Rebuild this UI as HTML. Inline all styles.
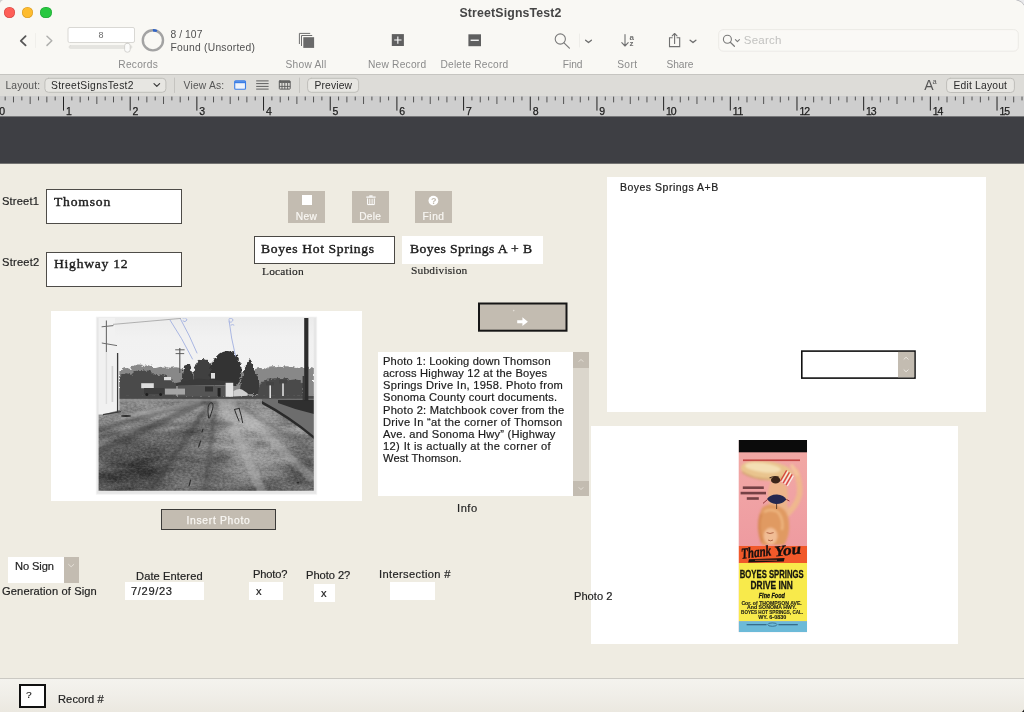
<!DOCTYPE html>
<html><head><meta charset="utf-8"><title>StreetSignsTest2</title>
<style>
html,body{margin:0;padding:0;background:#efece2;}
body{width:1024px;height:712px;overflow:hidden;}
#win{position:relative;width:1024px;height:712px;overflow:hidden;background:#efece2;font-family:"Liberation Sans",sans-serif;}
.t{position:absolute;white-space:pre;}
.a{position:absolute;box-sizing:border-box;}
svg{position:absolute;overflow:visible;}

</style></head>
<body>
<div id="win">
<!-- title + toolbar -->
<div class="a" style="left:0;top:0;width:1024px;height:74px;background:#f9f8f4;"></div>
<div class="a" style="left:0;top:74px;width:1024px;height:1px;background:#c6c5c1;"></div>
<div class="a" style="left:0;top:75px;width:1024px;height:21px;background:#dddcd8;"></div>
<!-- traffic lights -->
<div class="a" style="left:3.8px;top:7.1px;width:11.2px;height:11.2px;border-radius:50%;background:#fe5f57;box-shadow:inset 0 0 0 .6px rgba(160,30,30,.45);"></div>
<div class="a" style="left:21.9px;top:7.1px;width:11.2px;height:11.2px;border-radius:50%;background:#febc2e;box-shadow:inset 0 0 0 .6px rgba(170,110,10,.45);"></div>
<div class="a" style="left:40.4px;top:7.1px;width:11.2px;height:11.2px;border-radius:50%;background:#28c840;box-shadow:inset 0 0 0 .6px rgba(10,120,30,.45);"></div>
<!-- window corners -->
<svg style="left:0;top:0" width="1024" height="10" viewBox="0 0 1024 10" fill="none">
  <path d="M1016.4 0 H1024 V5.4 Q1022.6 1.6 1016.4 0 Z" fill="#ebebed"/>
  <path d="M1016.2 -.2 Q1022.4 1.4 1024.2 5.4" stroke="#bdbdc0" stroke-width="1"/>
  <path d="M0 3 V0 H3 Q.8 .8 0 3 Z" fill="#d0d0d0"/>
</svg>
<!-- nav chevrons -->
<svg style="left:0;top:0" width="1024" height="96" viewBox="0 0 1024 96" fill="none" stroke-linecap="round" stroke-linejoin="round">
  <path d="M25.6 36.2 L20.8 40.8 L25.6 45.4" stroke="#565656" stroke-width="1.8"/>
  <path d="M47 36.2 L51.8 40.8 L47 45.4" stroke="#b0b0ae" stroke-width="1.5"/>
  <path d="M35.5 33.5 V47.5" stroke="#f0efeb" stroke-width="1"/>
  <!-- record number box -->
  <rect x="68" y="27.5" width="66.5" height="15" rx="1.5" fill="#fff" stroke="#d9d8d4" stroke-width="1"/>
  <!-- slider -->
  <rect x="69" y="45.6" width="63" height="2.8" rx="1.4" fill="#e6e5e1" stroke="#dcdbd7" stroke-width=".6"/>
  <rect x="124.6" y="43.2" width="5.6" height="9" rx="2.6" fill="#fbfbfa" stroke="#cfcecb" stroke-width=".9"/>
  <!-- pie circle -->
  <circle cx="152.9" cy="40.3" r="10.1" stroke="#a3a3a3" stroke-width="2.4"/>
  <path d="M152.9 30.2 A10.1 10.1 0 0 1 156.9 31" stroke="#2f63c8" stroke-width="2.4" stroke-linecap="butt"/>
  <!-- show all -->
  <g stroke="#6e6e6e" stroke-width="1" stroke-linecap="butt" stroke-linejoin="miter">
    <path d="M299.4 44 V33.4 H310.2"/>
    <path d="M301.5 46 V35.5 H312.2"/>
  </g>
  <rect x="303.3" y="37.2" width="10.8" height="10.7" fill="#6a6a6a"/>
  <!-- new record -->
  <rect x="391.8" y="34.1" width="12.1" height="11.9" fill="#606060"/>
  <path d="M397.85 36.4 V43.7 M394.2 40.05 H401.5" stroke="#fff" stroke-width="1.1" stroke-linecap="butt"/>
  <!-- delete record -->
  <rect x="468.4" y="34.3" width="12.6" height="11.9" fill="#606060"/>
  <path d="M470.6 40.25 H478.8" stroke="#fff" stroke-width="1.3" stroke-linecap="butt"/>
  <!-- find -->
  <circle cx="560.3" cy="39" r="5.1" stroke="#7b7b7b" stroke-width="1.1"/>
  <path d="M564 42.8 L569.4 48.2" stroke="#7b7b7b" stroke-width="1.2"/>
  <path d="M579.5 34 V47" stroke="#eeede9" stroke-width="1"/>
  <path d="M585.6 40.2 L588.5 42.6 L591.4 40.2" stroke="#6e6e6e" stroke-width="1.3"/>
  <!-- sort -->
  <path d="M625 34.6 V45.6 M621.8 42.6 L625 46 L628.2 42.6" stroke="#707070" stroke-width="1.1"/>
  <!-- share -->
  <path d="M672.2 37.8 H669.5 V46.6 H679.7 V37.8 H677" stroke="#707070" stroke-width="1.1" stroke-linejoin="miter"/>
  <path d="M674.6 43.4 V33.6 M672.2 35.9 L674.6 33.5 L677 35.9" stroke="#707070" stroke-width="1.1"/>
  <path d="M690.1 40.2 L693 42.6 L695.9 40.2" stroke="#6e6e6e" stroke-width="1.3"/>
  <!-- search box -->
  <rect x="718.7" y="29.6" width="299.6" height="21.6" rx="4.5" fill="#faf9f6" stroke="#eceae6" stroke-width="1"/>
  <circle cx="727.4" cy="39.3" r="4" stroke="#7a7a7a" stroke-width="1.1"/>
  <path d="M730.3 42.3 L734.4 46.3" stroke="#7a7a7a" stroke-width="1.2"/>
  <path d="M735.4 39.6 L737.4 41.6 L739.4 39.6" stroke="#7a7a7a" stroke-width="1.1"/>
  <!-- layout bar: popup -->
  <rect x="44.9" y="78.3" width="121" height="14" rx="3.6" fill="#e7e6e2" stroke="#bfbeba" stroke-width="1"/>
  <path d="M154 83.6 L156.8 86.4 L159.6 83.6" stroke="#3a3a3a" stroke-width="1.2"/>
  <path d="M174.5 78 V92.5 M299.5 78 V92.5" stroke="#c5c4c0" stroke-width="1"/>
  <!-- view as: form (blue) -->
  <rect x="234.7" y="80.7" width="10.8" height="8.5" rx="1" fill="#eef3fb" stroke="#3a7ee6" stroke-width="1.1"/>
  <path d="M234.7 82.2 H245.5" stroke="#3a7ee6" stroke-width="2" stroke-linecap="butt"/>
  <!-- list -->
  <path d="M256.2 80.9 H268.6 M256.2 83.6 H268.6 M256.2 86.4 H268.6 M256.2 89.1 H268.6" stroke="#585858" stroke-width=".95" stroke-linecap="butt"/>
  <!-- table -->
  <rect x="279.3" y="80.8" width="10.9" height="8.3" rx=".6" stroke="#5a5a5a" stroke-width="1"/>
  <path d="M279.3 82 H290.2" stroke="#5a5a5a" stroke-width="1.8" stroke-linecap="butt"/>
  <path d="M279.3 86.4 H290.2 M282 83 V89.1 M284.8 83 V89.1 M287.6 83 V89.1" stroke="#5a5a5a" stroke-width=".9" stroke-linecap="butt"/>
  <!-- preview button -->
  <rect x="307.6" y="78.3" width="51" height="14" rx="3.6" fill="#e7e6e2" stroke="#bfbeba" stroke-width="1"/>
  <!-- edit layout button -->
  <rect x="946.6" y="78.3" width="67.8" height="14.2" rx="3.6" fill="#e7e6e2" stroke="#bfbeba" stroke-width="1"/>
</svg>

<div class="a" style="left:0;top:96px;width:1024px;height:20.4px;background:#cecece;"></div>
<div class="a" style="left:0;top:116px;width:1024px;height:48px;background:#3e3f44;"></div><div class="a" style="left:0;top:116px;width:1024px;height:1px;background:#77787a;"></div><div class="a" style="left:0;top:163px;width:1024px;height:1px;background:#737372;"></div>
<svg style="left:0;top:96px" width="1024" height="21" viewBox="0 0 1024 21" stroke="#2a2a2a" stroke-width="0.9" stroke-linecap="butt">
<path d="M63.50 0.6V14.6 M130.18 0.6V14.6 M196.86 0.6V14.6 M263.54 0.6V14.6 M330.22 0.6V14.6 M396.90 0.6V14.6 M463.58 0.6V14.6 M530.26 0.6V14.6 M596.94 0.6V14.6 M663.62 0.6V14.6 M730.30 0.6V14.6 M796.98 0.6V14.6 M863.66 0.6V14.6 M930.34 0.6V14.6 M997.02 0.6V14.6" stroke="#222" stroke-width="1"/>
<path d="M5.16 0.6V4.4 M13.49 0.6V6.4 M21.83 0.6V4.4 M30.16 0.6V8 M38.50 0.6V4.4 M46.83 0.6V6.4 M55.17 0.6V4.4 M71.84 0.6V4.4 M80.17 0.6V6.4 M88.50 0.6V4.4 M96.84 0.6V8 M105.18 0.6V4.4 M113.51 0.6V6.4 M121.84 0.6V4.4 M138.52 0.6V4.4 M146.85 0.6V6.4 M155.19 0.6V4.4 M163.52 0.6V8 M171.86 0.6V4.4 M180.19 0.6V6.4 M188.53 0.6V4.4 M205.20 0.6V4.4 M213.53 0.6V6.4 M221.87 0.6V4.4 M230.20 0.6V8 M238.54 0.6V4.4 M246.87 0.6V6.4 M255.21 0.6V4.4 M271.88 0.6V4.4 M280.21 0.6V6.4 M288.55 0.6V4.4 M296.88 0.6V8 M305.22 0.6V4.4 M313.55 0.6V6.4 M321.89 0.6V4.4 M338.56 0.6V4.4 M346.89 0.6V6.4 M355.23 0.6V4.4 M363.56 0.6V8 M371.90 0.6V4.4 M380.23 0.6V6.4 M388.57 0.6V4.4 M405.24 0.6V4.4 M413.57 0.6V6.4 M421.91 0.6V4.4 M430.24 0.6V8 M438.58 0.6V4.4 M446.91 0.6V6.4 M455.25 0.6V4.4 M471.92 0.6V4.4 M480.25 0.6V6.4 M488.59 0.6V4.4 M496.92 0.6V8 M505.26 0.6V4.4 M513.59 0.6V6.4 M521.93 0.6V4.4 M538.60 0.6V4.4 M546.93 0.6V6.4 M555.27 0.6V4.4 M563.60 0.6V8 M571.94 0.6V4.4 M580.27 0.6V6.4 M588.61 0.6V4.4 M605.28 0.6V4.4 M613.61 0.6V6.4 M621.95 0.6V4.4 M630.28 0.6V8 M638.62 0.6V4.4 M646.95 0.6V6.4 M655.29 0.6V4.4 M671.96 0.6V4.4 M680.29 0.6V6.4 M688.63 0.6V4.4 M696.96 0.6V8 M705.30 0.6V4.4 M713.63 0.6V6.4 M721.97 0.6V4.4 M738.64 0.6V4.4 M746.97 0.6V6.4 M755.31 0.6V4.4 M763.64 0.6V8 M771.98 0.6V4.4 M780.31 0.6V6.4 M788.65 0.6V4.4 M805.32 0.6V4.4 M813.65 0.6V6.4 M821.99 0.6V4.4 M830.32 0.6V8 M838.66 0.6V4.4 M846.99 0.6V6.4 M855.33 0.6V4.4 M872.00 0.6V4.4 M880.33 0.6V6.4 M888.67 0.6V4.4 M897.00 0.6V8 M905.34 0.6V4.4 M913.67 0.6V6.4 M922.01 0.6V4.4 M938.68 0.6V4.4 M947.01 0.6V6.4 M955.35 0.6V4.4 M963.68 0.6V8 M972.02 0.6V4.4 M980.35 0.6V6.4 M988.69 0.6V4.4 M1005.36 0.6V4.4 M1013.69 0.6V6.4 M1022.03 0.6V4.4" stroke="#444" stroke-width="0.9"/>
</svg>
<!-- ===== body ===== -->
<!-- street fields -->
<div class="a" style="left:45.9px;top:189.4px;width:135.8px;height:34.4px;background:#fff;border:1.1px solid #4e4c48;"></div>
<div class="a" style="left:45.9px;top:251.6px;width:135.8px;height:35px;background:#fff;border:1.1px solid #4e4c48;"></div>
<!-- buttons new/dele/find -->
<div class="a" style="left:288px;top:191.4px;width:36.8px;height:31.2px;background:#c3bcb1;"></div>
<div class="a" style="left:352px;top:191.4px;width:36.8px;height:31.2px;background:#c3bcb1;"></div>
<div class="a" style="left:414.7px;top:191.4px;width:37.3px;height:31.2px;background:#c3bcb1;"></div>
<div class="a" style="left:302px;top:195.2px;width:9.9px;height:9.8px;background:#fff;"></div>

<!-- location / subdivision -->
<div class="a" style="left:253.7px;top:236px;width:141px;height:28.4px;background:#fff;border:1.3px solid #4a4844;"></div>
<div class="a" style="left:401.7px;top:235.7px;width:141.1px;height:28.6px;background:#fff;"></div>
<!-- photo 1 container -->
<div class="a" style="left:51px;top:311px;width:310.5px;height:190px;background:#fff;"></div>
<!-- insert photo button -->
<div class="a" style="left:160.9px;top:509.4px;width:115px;height:20.2px;background:#c3bcb1;border:1.1px solid #3c3b39;"></div>
<!-- info box -->
<div class="a" style="left:377.6px;top:352.1px;width:195.6px;height:144.1px;background:#fff;"></div>
<div class="a" style="left:573.2px;top:352.1px;width:15.7px;height:144.1px;background:#dbd6cc;"></div>
<div class="a" style="left:573.2px;top:352.1px;width:15.7px;height:15.6px;background:#c3bcb1;"></div>
<div class="a" style="left:573.2px;top:480.8px;width:15.7px;height:15.4px;background:#c3bcb1;"></div>
<!-- right panel -->
<div class="a" style="left:607.3px;top:177.4px;width:378.8px;height:234.8px;background:#fff;"></div>
<!-- photo 2 container -->
<div class="a" style="left:591px;top:426px;width:366.5px;height:217.8px;background:#fff;"></div>
<!-- bottom fields -->
<div class="a" style="left:8.2px;top:556.7px;width:55.6px;height:26.3px;background:#fff;"></div>
<div class="a" style="left:63.8px;top:556.7px;width:14.8px;height:26.3px;background:#c3bcb1;"></div>
<div class="a" style="left:124.8px;top:581.8px;width:78.8px;height:18.3px;background:#fff;"></div>
<div class="a" style="left:249.2px;top:582px;width:34.2px;height:18px;background:#fff;"></div>
<div class="a" style="left:313.9px;top:583.6px;width:21.1px;height:18.3px;background:#fff;"></div>
<div class="a" style="left:389.8px;top:582px;width:45.5px;height:18px;background:#fff;"></div>
<!-- footer -->
<div class="a" style="left:0;top:678px;width:1024px;height:34px;background:linear-gradient(#f4f3ee,#f0eee8 50%,#ebe8e0);border-top:1px solid #cbc9c3;"></div>
<div class="a" style="left:18.8px;top:683.9px;width:27.2px;height:23.7px;background:#fff;border:2px solid #111;"></div>
<svg style="left:0;top:0" width="1024" height="712" viewBox="0 0 1024 712" fill="none">
  <!-- trash -->
  <g stroke="#fff" stroke-width="1" stroke-linecap="butt">
    <path d="M366.3 197.1 H375.6" stroke-width="1.2"/>
    <path d="M369.3 196 H372.6" stroke-width="1.3"/>
    <path d="M367.6 198.4 V204.6 H374.3 V198.4" stroke-width="1"/>
    <path d="M369.8 198.8 V204 M372.1 198.8 V204" stroke-width=".9"/>
  </g>
  <!-- ? icon -->
  <circle cx="433.4" cy="200.6" r="4.9" fill="#fff"/>
  <!-- arrow button -->
  <rect x="479" y="303.5" width="87.5" height="27.2" fill="#c3bcb1" stroke="#161616" stroke-width="2"/>
  <path d="M517.2 320.2 H522.4 V317.3 L527.9 321.7 L522.4 326.1 V323.2 H517.2 Z" fill="#fff"/>
  <circle cx="513.7" cy="310.6" r=".8" fill="#e6e1d9"/>
  <!-- small field w/ stepper -->
  <rect x="801.8" y="351.1" width="113.2" height="27" fill="#fff" stroke="#111" stroke-width="1.6"/>
  <rect x="898" y="351.9" width="16.2" height="25.4" fill="#c3bcb1"/>
  <path d="M904 359.2 L906.1 357.2 L908.2 359.2 M904 369.8 L906.1 371.8 L908.2 369.8" stroke="#e9e5de" stroke-width="1" stroke-linecap="round" stroke-linejoin="round"/>
  <!-- info scrollbar chevrons -->
  <path d="M579 361.4 L581 359.4 L583 361.4 M579 487.6 L581 489.6 L583 487.6" stroke="#e6e1d9" stroke-width="1" stroke-linecap="round" stroke-linejoin="round"/>
  <!-- no sign chevron -->
  <path d="M68.6 564.4 L71.2 566.8 L73.8 564.4" stroke="#e4dfd7" stroke-width="1" stroke-linecap="round" stroke-linejoin="round"/>
  <path d="M1024 709.6 Q1023 711.4 1021.8 712 H1024 Z" fill="#151515"/>
</svg>

<!-- ===== photo 1 (b/w street photo) ===== -->
<svg style="left:0;top:0" width="1024" height="712" viewBox="0 0 1024 712">
<defs>
  <clipPath id="p1clip"><rect x="98.6" y="318" width="215.2" height="172.8"/></clipPath>
  <linearGradient id="p1sky" x1="0" y1="0" x2="0" y2="1"><stop offset="0" stop-color="#ebebeb"/><stop offset=".25" stop-color="#f1f1f1"/><stop offset="1" stop-color="#f3f3f3"/></linearGradient>
  <linearGradient id="p1road" x1="0" y1="0" x2="0" y2="1"><stop offset="0" stop-color="#7a7a7a"/><stop offset=".12" stop-color="#8c8c8c"/><stop offset=".45" stop-color="#787878"/><stop offset="1" stop-color="#626262"/></linearGradient>
  <radialGradient id="p1lite" cx=".5" cy=".5" r=".5"><stop offset="0" stop-color="#b4b4b4" stop-opacity=".85"/><stop offset="1" stop-color="#b4b4b4" stop-opacity="0"/></radialGradient>
  <radialGradient id="p1dark" cx=".5" cy=".5" r=".5"><stop offset="0" stop-color="#2e2e2e" stop-opacity=".8"/><stop offset="1" stop-color="#2e2e2e" stop-opacity="0"/></radialGradient>
  <filter id="p1b1" color-interpolation-filters="sRGB" x="-5%" y="-5%" width="110%" height="110%"><feGaussianBlur stdDeviation=".7"/></filter>
  <filter id="p1b2" color-interpolation-filters="sRGB" x="-10%" y="-10%" width="120%" height="120%"><feGaussianBlur stdDeviation="1.6"/></filter>
  <filter id="p1b0" color-interpolation-filters="sRGB" x="-5%" y="-5%" width="110%" height="110%"><feGaussianBlur stdDeviation=".35"/></filter>
  <filter id="p1soft" color-interpolation-filters="sRGB" x="-2%" y="-2%" width="104%" height="104%"><feGaussianBlur stdDeviation=".45"/></filter>
  <filter id="p1tree" color-interpolation-filters="sRGB" x="-10%" y="-20%" width="120%" height="140%">
    <feTurbulence type="fractalNoise" baseFrequency=".35" numOctaves="2" seed="11" result="n"/>
    <feDisplacementMap in="SourceGraphic" in2="n" scale="5" xChannelSelector="R" yChannelSelector="G" result="d"/>
    <feGaussianBlur in="d" stdDeviation=".55"/>
  </filter>
  <filter id="p1tex" x="0" y="0" width="100%" height="100%" color-interpolation-filters="sRGB">
    <feTurbulence type="fractalNoise" baseFrequency=".025 .09" numOctaves="3" seed="7" result="n"/>
    <feColorMatrix in="n" type="matrix" values=".6 0 0 0 .2  .6 0 0 0 .2  .6 0 0 0 .2  0 0 0 0 1" result="g"/>
    <feBlend in="g" in2="SourceGraphic" mode="soft-light" result="o"/>
    <feComposite in="o" in2="SourceGraphic" operator="in"/>
  </filter>
  <filter id="p1tex2" x="0" y="0" width="100%" height="100%" color-interpolation-filters="sRGB">
    <feTurbulence type="fractalNoise" baseFrequency=".35 .6" numOctaves="2" seed="3" result="n"/>
    <feColorMatrix in="n" type="matrix" values=".5 0 0 0 .25  .5 0 0 0 .25  .5 0 0 0 .25  0 0 0 0 1" result="g"/>
    <feGaussianBlur in="g" stdDeviation=".5" result="gb"/>
    <feBlend in="gb" in2="SourceGraphic" mode="soft-light" result="o"/>
    <feComposite in="o" in2="SourceGraphic" operator="in"/>
  </filter>
</defs>
<!-- paper -->
<rect x="96.2" y="317" width="220.6" height="177.2" fill="#e6e6e6"/>
<rect x="96.2" y="317" width="220.6" height="177.2" fill="none" stroke="#f4f4f4" stroke-width=".8"/>
<g clip-path="url(#p1clip)"><g filter="url(#p1soft)">
  <rect x="98" y="317" width="217" height="82" fill="url(#p1sky)"/>
  <!-- road base with texture -->
  <g filter="url(#p1tex2)">
  <g filter="url(#p1tex)">
    <rect x="98" y="394" width="217" height="98" fill="url(#p1road)"/>
    <!-- light patches -->
    <ellipse cx="258" cy="440" rx="50" ry="32" fill="url(#p1lite)" transform="rotate(28 258 440)"/>
    <ellipse cx="240" cy="455" rx="40" ry="26" fill="url(#p1lite)" opacity=".6"/>
    <ellipse cx="236" cy="420" rx="36" ry="14" fill="url(#p1lite)" transform="rotate(12 236 420)"/>
    <ellipse cx="180" cy="412" rx="50" ry="8" fill="url(#p1lite)" opacity=".7" transform="rotate(-6 180 412)"/>
    <ellipse cx="250" cy="475" rx="40" ry="14" fill="url(#p1lite)" opacity=".6"/>
    <ellipse cx="300" cy="425" rx="16" ry="12" fill="url(#p1lite)" opacity=".8" transform="rotate(35 300 425)"/>
    <!-- dark patches -->
    <ellipse cx="140" cy="462" rx="56" ry="32" fill="url(#p1dark)"/>
    <ellipse cx="120" cy="480" rx="40" ry="18" fill="url(#p1dark)"/>
    <ellipse cx="190" cy="432" rx="46" ry="7" fill="url(#p1dark)" opacity=".75" transform="rotate(-8 190 432)"/>
    <ellipse cx="262" cy="444" rx="14" ry="6" fill="url(#p1dark)" opacity=".6"/>
    <ellipse cx="300" cy="470" rx="18" ry="22" fill="url(#p1dark)" opacity=".55"/>
    <ellipse cx="222" cy="458" rx="16" ry="4" fill="url(#p1dark)" opacity=".6"/>
  </g></g>
  <!-- perspective streaks -->
  <g filter="url(#p1b2)" fill="none" stroke-linecap="round">
    <path d="M212 400 L150 492" stroke="#3c3c3c" stroke-width="5" opacity=".45"/>
    <path d="M208 400 L98 452" stroke="#3a3a3a" stroke-width="6" opacity=".5"/>
    <path d="M205 400 L98 430" stroke="#444" stroke-width="4" opacity=".45"/>
    <path d="M216 402 L205 492" stroke="#474747" stroke-width="5" opacity=".4"/>
    <path d="M222 402 L262 492" stroke="#b5b5b5" stroke-width="9" opacity=".45"/>
    <path d="M230 402 L312 478" stroke="#b8b8b8" stroke-width="8" opacity=".4"/>
    <path d="M200 402 L120 418" stroke="#b0b0b0" stroke-width="3.4" opacity=".5"/>
    <path d="M236 404 L314 452" stroke="#4a4a4a" stroke-width="3" opacity=".35"/>
    <path d="M98 438 Q160 420 232 424" stroke="#3a3a3a" stroke-width="3" opacity=".4"/>
  </g>
  <!-- far cross street band -->
  <rect x="118" y="395.2" width="196" height="3.6" fill="#4a4a4a" filter="url(#p1b1)"/>
  <rect x="118" y="399.2" width="150" height="2.2" fill="#9a9a9a" opacity=".55" filter="url(#p1b1)"/>
  <!-- right curb / dirt -->
  <g filter="url(#p1b1)">
    <path d="M262 399 L314 399 L314 436 Q292 420 262 403 Z" fill="#6d6d6d"/>
    <path d="M278 400 L314 400 L314 414 Q296 410 278 403 Z" fill="#2f2f2f"/>
    <path d="M262 401 Q290 416 314 436 L314 439 Q290 419 262 404 Z" fill="#2a2a2a"/>
  </g>
  <!-- hazy background trees -->
  <g filter="url(#p1tree)">
    <path d="M119 396 V372 Q124 366 130 369 Q136 362 144 366 Q150 364 156 368 Q163 365 170 368 Q178 366 184 370 L190 372 L250 372 Q258 366 266 369 Q272 364 280 367 Q288 365 296 368 Q304 366 314 369 V396 Z" fill="#888"/>
  </g>
  <!-- darker foreground trees -->
  <g filter="url(#p1tree)">
    <path d="M119 396 V376 Q126 371 131 375 Q137 368 145 371 Q152 369 155 376 Q162 372 168 378 L176 384 L176 396 Z" fill="#4a4a4a"/>
    <path d="M182 384 Q181 374 184 368 Q186 362 190 364 Q192 372 194 384 Z" fill="#3c3c3c"/>
    <path d="M194 384 Q192 372 196 364 Q200 357 206 360 Q212 362 213 370 Q215 378 212 384 Z" fill="#404040"/>
    <path d="M210 384 Q208 372 213 362 Q217 352 226 351 Q234 350 238 358 Q243 366 241 376 Q240 382 236 386 Z" fill="#333"/>
    <path d="M240 394 Q240 380 244 372 Q246 362 250 359 Q253 364 255 372 Q260 380 260 394 Z" fill="#3a3a3a"/>
    <path d="M258 396 Q258 382 266 380 Q280 376 290 380 Q300 378 303 384 L303 396 Z" fill="#4a4a4a"/>
  </g>
  <!-- drive-in building -->
  <g filter="url(#p1b0)">
    <path d="M176 383 L198 378.6 L232 381.6 L236 384.5 L176 386 Z" fill="#3a3a3a"/>
    <rect x="178" y="385.5" width="48" height="11" fill="#555"/>
    <rect x="225.6" y="382.8" width="7.6" height="14" fill="#e2e2e2"/>
    <rect x="217.6" y="388" width="3" height="8.6" fill="#222"/>
    <rect x="205" y="386.5" width="8" height="5" fill="#333"/>
    <rect x="211" y="373" width="4" height="5.6" fill="#ddd"/>
    <path d="M233.5 396.5 V391 Q238 388.4 242 389.4 L247.6 393.2 V395.8 Z" fill="#cfcfcf"/>
    <!-- truck + cars -->
    <rect x="141.2" y="383.2" width="12.6" height="5" fill="#dedede"/>
    <rect x="144" y="388" width="20" height="6" fill="#3d3d3d"/>
    <rect x="165" y="388.6" width="20" height="6" fill="#a5a5a5"/>
    <rect x="164" y="377" width="7" height="3.2" fill="#ddd"/>
    <circle cx="146.8" cy="394.6" r="1.5" fill="#1e1e1e"/><circle cx="160.6" cy="394.6" r="1.5" fill="#1e1e1e"/>
    <!-- sign posts right -->
    <rect x="269.4" y="385" width="1.6" height="13" fill="#ddd"/><rect x="282.2" y="383" width="1.6" height="13" fill="#ddd"/>
    <rect x="266" y="382" width="8" height="3.4" fill="#444"/><rect x="279" y="380" width="8" height="3.4" fill="#444"/>
  </g>
  <!-- blue pen marks -->
  <g stroke="#a9b6e2" fill="none" stroke-width="1" stroke-linecap="round" filter="url(#p1b0)">
    <path d="M170 320 Q182 338 192.5 359"/>
    <path d="M180.5 319 Q190 336 197 353"/>
    <path d="M183 318 q3 -1 4 2 q-2 3 -4 1"/>
    <path d="M229 320 Q231 338 235.5 356"/>
    <path d="M229 319 q3 -2 4 1 q-1 3 -4 2 M231 325 q2 -1 3 0"/>
  </g>
  <!-- left white building -->
  <g filter="url(#p1b0)">
    <path d="M98 317 H115 V352 L119.4 352.6 L119.4 410 L103 414.4 L98 414.4 Z" fill="#f1f1f1"/>
    <path d="M117.6 353 V412" stroke="#3a3a3a" stroke-width="1.3"/>
    <path d="M112.4 366 V402" stroke="#d2d2d2" stroke-width="1.6"/>
    <path d="M106.4 352 V404" stroke="#dedede" stroke-width="1.4"/>
    <path d="M103 414.6 L121 411.6" stroke="#3d3d3d" stroke-width="1.2"/>
    <ellipse cx="126" cy="416" rx="5" ry=".9" fill="#2d2d2d"/>
  </g>
  <!-- utility poles + wire -->
  <g stroke="#6c6c6c" fill="none" filter="url(#p1b0)">
    <path d="M106.4 320.5 V352" stroke-width="1.1"/>
    <path d="M101.6 326.8 L113.4 325.6 M101.8 343 L117 345.6" stroke-width="1"/>
    <path d="M113 324.4 L181 318.4" stroke="#a0a0a0" stroke-width=".8"/>
    <path d="M179.8 348 V373" stroke="#555" stroke-width="1.1"/>
    <path d="M175.2 349.8 H184.6 M175.6 353.6 H184.2" stroke="#555" stroke-width=".9"/>
  </g>
  <!-- right pole -->
  <rect x="304.2" y="317" width="4.2" height="84" fill="#2c2c2c" filter="url(#p1b0)"/>
  <rect x="302.6" y="376" width="2.2" height="24" fill="#3a3a3a" filter="url(#p1b0)"/>
  <!-- road marks -->
  <g stroke="#2d2d2d" fill="none" stroke-width="1" stroke-linecap="round" filter="url(#p1b0)">
    <path d="M208.6 418 Q206.4 404 211 402.6 Q214 403 212.6 409 Q211 414 209.6 418"/>
    <path d="M234.6 409.6 Q236.6 416 239 421 M239.2 408.6 Q241.6 416 242.6 422.6 M234.6 409.4 L239.4 408.4"/>
    <path d="M200.6 441 L198.6 447 M203 429 L202 432 M190.6 480 L189 486" stroke-width="1.1"/>
  </g>
  <ellipse cx="298" cy="482.6" rx="1.3" ry=".9" fill="#2a2a2a"/>
</g></g>
</svg>

<!-- ===== photo 2 (matchbook) ===== -->
<svg style="left:0;top:0" width="1024" height="712" viewBox="0 0 1024 712">
<defs>
  <filter id="m_b0" color-interpolation-filters="sRGB" x="-5%" y="-5%" width="110%" height="110%"><feGaussianBlur stdDeviation=".45"/></filter>
  <filter id="m_b1" color-interpolation-filters="sRGB" x="-20%" y="-20%" width="140%" height="140%"><feGaussianBlur stdDeviation="1.1"/></filter>
  <filter id="m_b2" color-interpolation-filters="sRGB" x="-20%" y="-20%" width="140%" height="140%"><feGaussianBlur stdDeviation="2.4"/></filter>
  <linearGradient id="m_pink" x1="0" y1="0" x2="0" y2="1"><stop offset="0" stop-color="#f1a8a4"/><stop offset=".5" stop-color="#f0a2a4"/><stop offset="1" stop-color="#ee9ba0"/></linearGradient>
  <clipPath id="m_clip"><rect x="738.6" y="440" width="68.5" height="192.2"/></clipPath>
</defs>
<g filter="url(#m_b0)">
<g clip-path="url(#m_clip)">
  <rect x="738.6" y="440" width="68.5" height="192.2" fill="#f3a2a6"/>
  <rect x="738.6" y="452.2" width="68.5" height="94" fill="url(#m_pink)"/>
  <!-- figure -->
  <g filter="url(#m_b1)">
    <ellipse cx="766.5" cy="470.6" rx="26" ry="9.6" fill="#e9c48e" transform="rotate(7 766.5 470.6)"/>
    <ellipse cx="763" cy="467.6" rx="18" ry="4.6" fill="#f4dfb4" transform="rotate(7 763 467.6)"/>
    <path d="M742 472 Q760 484 788 476" fill="none" stroke="#c99a62" stroke-width="1.6" opacity=".7"/>
    <!-- arm right -->
    <path d="M795.6 471 Q801 483 799.4 495 Q796 507 785 516" fill="none" stroke="#efb88e" stroke-width="5.6" stroke-linecap="round"/>
    <path d="M792 466 L797 474" fill="none" stroke="#f3c39c" stroke-width="4" stroke-linecap="round"/>
    <!-- torso -->
    <path d="M771 482 Q782 480 787 487 Q789 496 787 504 Q790 512 786 520 Q780 524 772 520 Q767 512 769 502 Q766 492 771 482 Z" fill="#ecb48a"/>
    <!-- hair -->
    <path d="M762 508 Q768 502 778 506 Q788 510 789 522 Q790 536 784 545 L762 545 Q757 534 759 522 Q759 514 762 508 Z" fill="#e09a62"/>
    <path d="M764 512 Q770 508 778 512 Q784 520 782 530" fill="none" stroke="#eeb680" stroke-width="2.4"/>
    <ellipse cx="770.6" cy="536" rx="7" ry="8.6" fill="#f1bd95"/>
    <path d="M761 514 Q757 526 762 542" fill="none" stroke="#d48850" stroke-width="2.4"/>
  </g>
  <g filter="url(#m_b0)">
    <!-- striped cloth -->
    <g stroke-width="1.2" fill="none">
      <path d="M780.4 481 L786.6 470.4" stroke="#d6423c"/><path d="M781.8 482 L788 471.4" stroke="#f7ece6"/>
      <path d="M783.2 483 L789.4 472.4" stroke="#d6423c"/><path d="M784.6 484 L790.8 473.4" stroke="#f7ece6"/>
      <path d="M786 485 L792.2 474.4" stroke="#d6423c"/><path d="M787.4 486 L793.4 475.6" stroke="#f7ece6"/>
    </g>
    <!-- dark hair bun -->
    <ellipse cx="775.6" cy="480" rx="4.6" ry="3.6" fill="#3a2418"/>
    <path d="M769.6 478 q4 -2.4 9 -1" stroke="#3a2418" stroke-width="1.1" fill="none"/>
    <!-- bikini -->
    <path d="M767 499 Q770 494.2 777 494.4 Q784 494.8 786.4 499.4 Q782 504.2 776 504 Q770 503.6 767 499 Z" fill="#232850"/>
    <path d="M763 503.4 L767.4 499.6 M786.4 499.4 L789.4 501" stroke="#8a2a2a" stroke-width=".9"/>
    <path d="M776.6 504 V509" stroke="#3a2418" stroke-width=".8"/>
    <!-- top tiny red text line -->
    <rect x="743" y="459.4" width="57" height="1.7" fill="#b8302e" opacity=".8"/>
    <!-- mirrored text block -->
    <g fill="#5e3034" opacity=".85">
      <rect x="742.8" y="486.4" width="21" height="2.6"/>
      <rect x="740.6" y="491.8" width="25.4" height="2.6"/>
      <rect x="746.8" y="497.2" width="12" height="2.6"/>
    </g>
    <!-- face details -->
    <path d="M766.6 532.6 q3.4 1.8 7 0 M768 540 q2.6 1.6 5 0" stroke="#a85a3c" stroke-width=".9" fill="none"/>
  </g>
  <!-- black strip -->
  <rect x="738.6" y="440" width="68.5" height="12.3" fill="#0b0b0b"/>
  <!-- orange band -->
  <rect x="738.6" y="546" width="68.5" height="17" fill="#f1592a"/>
  <!-- yellow -->
  <rect x="738.6" y="563" width="68.5" height="58.2" fill="#f8ea4b"/>
  <!-- blue -->
  <rect x="738.6" y="621.2" width="68.5" height="11" fill="#6cbad8"/>
  <!-- Thank You -->
  <g font-family="'Liberation Serif', serif" font-style="italic" font-weight="700" fill="#141010" stroke="#141010" stroke-width=".35">
    <text x="741.6" y="558.6" font-size="15" textLength="30" lengthAdjust="spacingAndGlyphs" transform="rotate(-6 742 558)">Thank</text>
    <text x="775" y="556.4" font-size="15" textLength="26.6" lengthAdjust="spacingAndGlyphs" transform="rotate(-6 775 556)">You</text>
  </g>
  <path d="M749 559.2 L784.6 558 L783.8 561.6 L748.2 562.4 Z" fill="#181210"/>
  <rect x="755" y="559.8" width="22" height="1" fill="#d85a34" opacity=".8"/>
  <!-- yellow text -->
  <g font-family="'Liberation Sans', sans-serif" font-weight="700" fill="#15150f" stroke="#15150f" stroke-width=".3">
    <text x="739.8" y="578" font-size="11" textLength="63.8" lengthAdjust="spacingAndGlyphs">BOYES SPRINGS</text>
    <text x="750.6" y="589.1" font-size="10.6" textLength="42.2" lengthAdjust="spacingAndGlyphs">DRIVE INN</text>
    <text x="758.8" y="597.5" font-size="6.6" font-style="italic" textLength="26" lengthAdjust="spacingAndGlyphs">Fine Food</text>
    <g font-size="4.9" fill="#2a2a1c" stroke-width=".12">
      <text x="741.4" y="604.5" textLength="60.4" lengthAdjust="spacingAndGlyphs">Cor. of THOMPSON AVE.</text>
      <text x="747" y="609.4" textLength="49.4" lengthAdjust="spacingAndGlyphs">And SONOMA HWY.</text>
      <text x="741.1" y="614.3" textLength="62" lengthAdjust="spacingAndGlyphs">BOYES HOT SPRINGS, CAL.</text>
      <text x="758.2" y="619.2" textLength="28" lengthAdjust="spacingAndGlyphs">WY. 6-0830</text>
    </g>
  </g>
  <!-- blue strip tiny text -->
  <rect x="746.6" y="624" width="20" height="1.3" fill="#2a5a78" opacity=".8"/>
  <rect x="778.4" y="624" width="19.4" height="1.3" fill="#2a5a78" opacity=".8"/>
  <ellipse cx="772.4" cy="624.6" rx="4.6" ry="1.7" fill="none" stroke="#2a5a78" stroke-width=".7"/>
</g>
</g>
</svg>

<div id="tx" style="position:absolute;left:0;top:0;width:1024px;height:712px;will-change:transform;">
<span class="t" style="left:459.50px;top:7.01px;font:700 12.3px/12.3px 'Liberation Sans', sans-serif;color:#454545;letter-spacing:0.157px;">StreetSignsTest2</span>
<span class="t" style="left:98.60px;top:31.31px;font:400 9px/9px 'Liberation Sans', sans-serif;color:#6a6a6a;letter-spacing:0.000px;">8</span>
<span class="t" style="left:170.50px;top:29.91px;font:400 10.3px/10.3px 'Liberation Sans', sans-serif;color:#505050;letter-spacing:0.067px;">8 / 107</span>
<span class="t" style="left:170.50px;top:42.71px;font:400 10.3px/10.3px 'Liberation Sans', sans-serif;color:#505050;letter-spacing:0.246px;">Found (Unsorted)</span>
<span class="t" style="left:118.30px;top:60.40px;font:400 10.2px/10.2px 'Liberation Sans', sans-serif;color:#8b8b8b;letter-spacing:0.252px;">Records</span>
<span class="t" style="left:285.60px;top:60.40px;font:400 10.2px/10.2px 'Liberation Sans', sans-serif;color:#8b8b8b;letter-spacing:0.225px;">Show All</span>
<span class="t" style="left:368.00px;top:60.40px;font:400 10.2px/10.2px 'Liberation Sans', sans-serif;color:#8b8b8b;letter-spacing:0.226px;">New Record</span>
<span class="t" style="left:440.40px;top:60.40px;font:400 10.2px/10.2px 'Liberation Sans', sans-serif;color:#8b8b8b;letter-spacing:0.231px;">Delete Record</span>
<span class="t" style="left:562.70px;top:60.40px;font:400 10.2px/10.2px 'Liberation Sans', sans-serif;color:#8b8b8b;letter-spacing:-0.009px;">Find</span>
<span class="t" style="left:617.20px;top:60.40px;font:400 10.2px/10.2px 'Liberation Sans', sans-serif;color:#8b8b8b;letter-spacing:0.371px;">Sort</span>
<span class="t" style="left:666.40px;top:60.40px;font:400 10.2px/10.2px 'Liberation Sans', sans-serif;color:#8b8b8b;letter-spacing:-0.047px;">Share</span>
<span class="t" style="left:743.75px;top:34.61px;font:400 11.5px/11.5px 'Liberation Sans', sans-serif;color:#c2c2c0;letter-spacing:0.263px;">Search</span>
<span class="t" style="left:5.50px;top:80.91px;font:400 10.3px/10.3px 'Liberation Sans', sans-serif;color:#555;letter-spacing:0.120px;">Layout:</span>
<span class="t" style="left:51.00px;top:80.91px;font:400 10.3px/10.3px 'Liberation Sans', sans-serif;color:#2a2a2a;letter-spacing:0.310px;">StreetSignsTest2</span>
<span class="t" style="left:183.60px;top:80.91px;font:400 10.3px/10.3px 'Liberation Sans', sans-serif;color:#555;letter-spacing:0.191px;">View As:</span>
<span class="t" style="left:314.50px;top:80.91px;font:400 10.3px/10.3px 'Liberation Sans', sans-serif;color:#2a2a2a;letter-spacing:0.146px;">Preview</span>
<span class="t" style="left:953.40px;top:80.91px;font:400 10.3px/10.3px 'Liberation Sans', sans-serif;color:#2a2a2a;letter-spacing:0.207px;">Edit Layout</span>
<span class="t" style="left:-0.78px;top:106.31px;font:400 10.5px/10.5px 'Liberation Sans', sans-serif;color:#1c1c1c;letter-spacing:0.000px;-webkit-text-stroke:0.25px #1c1c1c;">0</span>
<span class="t" style="left:65.90px;top:106.31px;font:400 10.5px/10.5px 'Liberation Sans', sans-serif;color:#1c1c1c;letter-spacing:0.000px;-webkit-text-stroke:0.25px #1c1c1c;">1</span>
<span class="t" style="left:132.58px;top:106.31px;font:400 10.5px/10.5px 'Liberation Sans', sans-serif;color:#1c1c1c;letter-spacing:0.000px;-webkit-text-stroke:0.25px #1c1c1c;">2</span>
<span class="t" style="left:199.26px;top:106.31px;font:400 10.5px/10.5px 'Liberation Sans', sans-serif;color:#1c1c1c;letter-spacing:0.000px;-webkit-text-stroke:0.25px #1c1c1c;">3</span>
<span class="t" style="left:265.94px;top:106.31px;font:400 10.5px/10.5px 'Liberation Sans', sans-serif;color:#1c1c1c;letter-spacing:0.000px;-webkit-text-stroke:0.25px #1c1c1c;">4</span>
<span class="t" style="left:332.62px;top:106.31px;font:400 10.5px/10.5px 'Liberation Sans', sans-serif;color:#1c1c1c;letter-spacing:0.000px;-webkit-text-stroke:0.25px #1c1c1c;">5</span>
<span class="t" style="left:399.30px;top:106.31px;font:400 10.5px/10.5px 'Liberation Sans', sans-serif;color:#1c1c1c;letter-spacing:0.000px;-webkit-text-stroke:0.25px #1c1c1c;">6</span>
<span class="t" style="left:465.98px;top:106.31px;font:400 10.5px/10.5px 'Liberation Sans', sans-serif;color:#1c1c1c;letter-spacing:0.000px;-webkit-text-stroke:0.25px #1c1c1c;">7</span>
<span class="t" style="left:532.66px;top:106.31px;font:400 10.5px/10.5px 'Liberation Sans', sans-serif;color:#1c1c1c;letter-spacing:0.000px;-webkit-text-stroke:0.25px #1c1c1c;">8</span>
<span class="t" style="left:599.34px;top:106.31px;font:400 10.5px/10.5px 'Liberation Sans', sans-serif;color:#1c1c1c;letter-spacing:0.000px;-webkit-text-stroke:0.25px #1c1c1c;">9</span>
<span class="t" style="left:666.02px;top:106.31px;font:400 10.5px/10.5px 'Liberation Sans', sans-serif;color:#1c1c1c;letter-spacing:-1.087px;-webkit-text-stroke:0.25px #1c1c1c;">10</span>
<span class="t" style="left:732.70px;top:106.31px;font:400 10.5px/10.5px 'Liberation Sans', sans-serif;color:#1c1c1c;letter-spacing:-0.306px;-webkit-text-stroke:0.25px #1c1c1c;">11</span>
<span class="t" style="left:799.38px;top:106.31px;font:400 10.5px/10.5px 'Liberation Sans', sans-serif;color:#1c1c1c;letter-spacing:-1.087px;-webkit-text-stroke:0.25px #1c1c1c;">12</span>
<span class="t" style="left:866.06px;top:106.31px;font:400 10.5px/10.5px 'Liberation Sans', sans-serif;color:#1c1c1c;letter-spacing:-1.087px;-webkit-text-stroke:0.25px #1c1c1c;">13</span>
<span class="t" style="left:932.74px;top:106.31px;font:400 10.5px/10.5px 'Liberation Sans', sans-serif;color:#1c1c1c;letter-spacing:-1.087px;-webkit-text-stroke:0.25px #1c1c1c;">14</span>
<span class="t" style="left:999.42px;top:106.31px;font:400 10.5px/10.5px 'Liberation Sans', sans-serif;color:#1c1c1c;letter-spacing:-1.087px;-webkit-text-stroke:0.25px #1c1c1c;">15</span>
<span class="t" style="left:2.10px;top:196.21px;font:400 10.5px/10.5px 'Liberation Sans', sans-serif;color:#222;letter-spacing:0.159px;-webkit-text-stroke:0.18px #222;transform:scaleX(1.06);transform-origin:0 0;">Street1</span>
<span class="t" style="left:2.10px;top:256.50px;font:400 10.5px/10.5px 'Liberation Sans', sans-serif;color:#222;letter-spacing:0.206px;-webkit-text-stroke:0.18px #222;transform:scaleX(1.06);transform-origin:0 0;">Street2</span>
<span class="t" style="left:457.20px;top:502.81px;font:400 10.5px/10.5px 'Liberation Sans', sans-serif;color:#222;letter-spacing:0.514px;-webkit-text-stroke:0.18px #222;transform:scaleX(1.06);transform-origin:0 0;">Info</span>
<span class="t" style="left:14.50px;top:560.61px;font:400 10.5px/10.5px 'Liberation Sans', sans-serif;color:#222;letter-spacing:-0.094px;-webkit-text-stroke:0.18px #222;transform:scaleX(1.06);transform-origin:0 0;">No Sign</span>
<span class="t" style="left:1.90px;top:586.41px;font:400 10.5px/10.5px 'Liberation Sans', sans-serif;color:#222;letter-spacing:0.110px;-webkit-text-stroke:0.18px #222;transform:scaleX(1.06);transform-origin:0 0;">Generation of Sign</span>
<span class="t" style="left:135.60px;top:571.21px;font:400 10.5px/10.5px 'Liberation Sans', sans-serif;color:#222;letter-spacing:0.087px;-webkit-text-stroke:0.18px #222;transform:scaleX(1.06);transform-origin:0 0;">Date Entered</span>
<span class="t" style="left:131.40px;top:586.41px;font:400 10.5px/10.5px 'Liberation Sans', sans-serif;color:#222;letter-spacing:0.605px;-webkit-text-stroke:0.18px #222;transform:scaleX(1.06);transform-origin:0 0;">7/29/23</span>
<span class="t" style="left:252.50px;top:568.71px;font:400 10.5px/10.5px 'Liberation Sans', sans-serif;color:#222;letter-spacing:-0.147px;-webkit-text-stroke:0.18px #222;transform:scaleX(1.06);transform-origin:0 0;">Photo?</span>
<span class="t" style="left:255.80px;top:586.31px;font:400 10.5px/10.5px 'Liberation Sans', sans-serif;color:#222;letter-spacing:0.000px;-webkit-text-stroke:0.18px #222;transform:scaleX(1.06);transform-origin:0 0;">x</span>
<span class="t" style="left:306.40px;top:569.91px;font:400 10.5px/10.5px 'Liberation Sans', sans-serif;color:#222;letter-spacing:-0.036px;-webkit-text-stroke:0.18px #222;transform:scaleX(1.06);transform-origin:0 0;">Photo 2?</span>
<span class="t" style="left:320.90px;top:588.21px;font:400 10.5px/10.5px 'Liberation Sans', sans-serif;color:#222;letter-spacing:0.000px;-webkit-text-stroke:0.18px #222;transform:scaleX(1.06);transform-origin:0 0;">x</span>
<span class="t" style="left:378.80px;top:568.71px;font:400 10.5px/10.5px 'Liberation Sans', sans-serif;color:#222;letter-spacing:0.339px;-webkit-text-stroke:0.18px #222;transform:scaleX(1.06);transform-origin:0 0;">Intersection #</span>
<span class="t" style="left:574.00px;top:591.00px;font:400 10.5px/10.5px 'Liberation Sans', sans-serif;color:#222;letter-spacing:0.004px;-webkit-text-stroke:0.18px #222;transform:scaleX(1.06);transform-origin:0 0;">Photo 2</span>
<span class="t" style="left:57.50px;top:693.71px;font:400 10.5px/10.5px 'Liberation Sans', sans-serif;color:#222;letter-spacing:0.072px;-webkit-text-stroke:0.18px #222;transform:scaleX(1.06);transform-origin:0 0;">Record #</span>
<span class="t" style="left:26.30px;top:690.20px;font:400 9.5px/9.5px 'Liberation Sans', sans-serif;color:#222;letter-spacing:0.000px;-webkit-text-stroke:0.18px #222;transform:scaleX(1.06);transform-origin:0 0;">?</span>
<span class="t" style="left:383.40px;top:356.31px;font:400 10.5px/10.5px 'Liberation Sans', sans-serif;color:#1a1a1a;letter-spacing:0.171px;-webkit-text-stroke:0.18px #1a1a1a;transform:scaleX(1.06);transform-origin:0 0;">Photo 1: Looking down Thomson</span>
<span class="t" style="left:383.40px;top:368.36px;font:400 10.5px/10.5px 'Liberation Sans', sans-serif;color:#1a1a1a;letter-spacing:0.166px;-webkit-text-stroke:0.18px #1a1a1a;transform:scaleX(1.06);transform-origin:0 0;">across Highway 12 at the Boyes</span>
<span class="t" style="left:383.40px;top:380.41px;font:400 10.5px/10.5px 'Liberation Sans', sans-serif;color:#1a1a1a;letter-spacing:0.261px;-webkit-text-stroke:0.18px #1a1a1a;transform:scaleX(1.06);transform-origin:0 0;">Springs Drive In, 1958. Photo from</span>
<span class="t" style="left:383.40px;top:392.46px;font:400 10.5px/10.5px 'Liberation Sans', sans-serif;color:#1a1a1a;letter-spacing:0.192px;-webkit-text-stroke:0.18px #1a1a1a;transform:scaleX(1.06);transform-origin:0 0;">Sonoma County court documents.</span>
<span class="t" style="left:383.40px;top:404.50px;font:400 10.5px/10.5px 'Liberation Sans', sans-serif;color:#1a1a1a;letter-spacing:0.235px;-webkit-text-stroke:0.18px #1a1a1a;transform:scaleX(1.06);transform-origin:0 0;">Photo 2: Matchbook cover from the</span>
<span class="t" style="left:383.40px;top:416.56px;font:400 10.5px/10.5px 'Liberation Sans', sans-serif;color:#1a1a1a;letter-spacing:0.280px;-webkit-text-stroke:0.18px #1a1a1a;transform:scaleX(1.06);transform-origin:0 0;">Drive In “at the corner of Thomson</span>
<span class="t" style="left:383.40px;top:428.61px;font:400 10.5px/10.5px 'Liberation Sans', sans-serif;color:#1a1a1a;letter-spacing:0.209px;-webkit-text-stroke:0.18px #1a1a1a;transform:scaleX(1.06);transform-origin:0 0;">Ave. and Sonoma Hwy” (Highway</span>
<span class="t" style="left:383.40px;top:440.66px;font:400 10.5px/10.5px 'Liberation Sans', sans-serif;color:#1a1a1a;letter-spacing:0.342px;-webkit-text-stroke:0.18px #1a1a1a;transform:scaleX(1.06);transform-origin:0 0;">12) It is actually at the corner of</span>
<span class="t" style="left:383.40px;top:452.71px;font:400 10.5px/10.5px 'Liberation Sans', sans-serif;color:#1a1a1a;letter-spacing:0.083px;-webkit-text-stroke:0.18px #1a1a1a;transform:scaleX(1.06);transform-origin:0 0;">West Thomson.</span>
<span class="t" style="left:54.40px;top:196.31px;font:400 12.4px/12.4px 'Liberation Serif', serif;color:#1d1d1d;letter-spacing:0.713px;-webkit-text-stroke:0.38px #1d1d1d;transform:scaleX(1.1);transform-origin:0 0;">Thomson</span>
<span class="t" style="left:54.40px;top:258.01px;font:400 12.4px/12.4px 'Liberation Serif', serif;color:#1d1d1d;letter-spacing:0.665px;-webkit-text-stroke:0.38px #1d1d1d;transform:scaleX(1.1);transform-origin:0 0;">Highway 12</span>
<span class="t" style="left:261.40px;top:242.60px;font:400 12.4px/12.4px 'Liberation Serif', serif;color:#1d1d1d;letter-spacing:0.568px;-webkit-text-stroke:0.38px #1d1d1d;transform:scaleX(1.1);transform-origin:0 0;">Boyes Hot Springs</span>
<span class="t" style="left:409.50px;top:242.60px;font:400 12.4px/12.4px 'Liberation Serif', serif;color:#1d1d1d;letter-spacing:0.385px;-webkit-text-stroke:0.38px #1d1d1d;transform:scaleX(1.1);transform-origin:0 0;">Boyes Springs A + B</span>
<span class="t" style="left:262.30px;top:266.82px;font:400 10.6px/10.6px 'Liberation Serif', serif;color:#1d1d1d;letter-spacing:0.136px;-webkit-text-stroke:0.12px #1d1d1d;transform:scaleX(1.08);transform-origin:0 0;">Location</span>
<span class="t" style="left:410.70px;top:266.41px;font:400 10.6px/10.6px 'Liberation Serif', serif;color:#1d1d1d;letter-spacing:0.149px;-webkit-text-stroke:0.12px #1d1d1d;transform:scaleX(1.08);transform-origin:0 0;">Subdivision</span>
<span class="t" style="left:619.90px;top:181.61px;font:400 10.5px/10.5px 'Liberation Sans', sans-serif;color:#222;letter-spacing:0.507px;-webkit-text-stroke:0.2px #222;">Boyes Springs A+B</span>
<span class="t" style="left:295.80px;top:211.81px;font:400 10.2px/10.2px 'Liberation Sans', sans-serif;color:#f8f6f2;letter-spacing:0.355px;-webkit-text-stroke:0.2px #f8f6f2;">New</span>
<span class="t" style="left:359.20px;top:211.81px;font:400 10.2px/10.2px 'Liberation Sans', sans-serif;color:#f8f6f2;letter-spacing:0.282px;-webkit-text-stroke:0.2px #f8f6f2;">Dele</span>
<span class="t" style="left:422.60px;top:211.81px;font:400 10.2px/10.2px 'Liberation Sans', sans-serif;color:#f8f6f2;letter-spacing:0.524px;-webkit-text-stroke:0.2px #f8f6f2;">Find</span>
<span class="t" style="left:186.50px;top:515.52px;font:400 10.3px/10.3px 'Liberation Sans', sans-serif;color:#f8f6f2;letter-spacing:0.697px;-webkit-text-stroke:0.25px #f8f6f2;">Insert Photo</span>
<span class="t" style="left:629.40px;top:33.71px;font:700 8px/8px 'Liberation Sans', sans-serif;color:#707070;letter-spacing:0.000px;">a</span>
<span class="t" style="left:629.60px;top:40.31px;font:700 8px/8px 'Liberation Sans', sans-serif;color:#707070;letter-spacing:0.000px;">z</span>
<span class="t" style="left:924.30px;top:77.51px;font:400 14px/14px 'Liberation Sans', sans-serif;color:#555;letter-spacing:0.000px;">A</span>
<span class="t" style="left:932.60px;top:78.21px;font:400 7.5px/7.5px 'Liberation Sans', sans-serif;color:#555;letter-spacing:0.000px;">a</span>
<span class="t" style="left:431.10px;top:196.92px;font:700 9px/9px 'Liberation Sans', sans-serif;color:#c3bcb1;letter-spacing:0.000px;">?</span>
</div>
</div>
</body></html>
